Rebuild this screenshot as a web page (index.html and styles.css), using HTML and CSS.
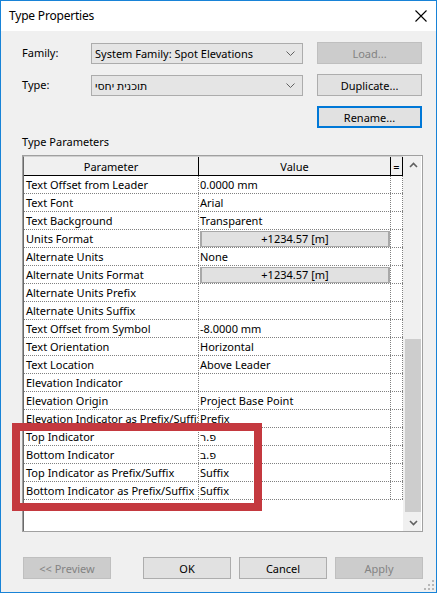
FILE: index.html
```html
<!DOCTYPE html>
<html>
<head>
<meta charset="utf-8">
<link rel="stylesheet" href="styles.css">
</head>
<body>
<div class="window">
  <div class="titlebar">
    <span class="title">Type Properties</span>
    <svg class="close" width="12" height="12" viewBox="0 0 12 12"><path d="M0.5 0.5 L11.5 11.5 M11.5 0.5 L0.5 11.5" stroke="#000" stroke-width="1.1" fill="none"/></svg>
  </div>
  <div class="body">
    <div class="top-grid">
      <span class="lbl">Family:</span>
      <div class="combo"><span class="combo-text">System Family: Spot Elevations</span><svg class="chev" width="9" height="5" viewBox="0 0 9 5"><path d="M0.5 0.5 L4.5 4.5 L8.5 0.5" stroke="#606060" fill="none"/></svg></div>
      <div class="btn disabled">Load...</div>
      <span class="lbl">Type:</span>
      <div class="combo"><span class="combo-text">תוכנית יחסי</span><svg class="chev" width="9" height="5" viewBox="0 0 9 5"><path d="M0.5 0.5 L4.5 4.5 L8.5 0.5" stroke="#606060" fill="none"/></svg></div>
      <div class="btn">Duplicate...</div>
      <span></span>
      <span></span>
      <div class="btn focus">Rename...</div>
    </div>
    <div class="section-label">Type Parameters</div>
    <div class="table-box">
      <div class="grid">
        <div class="row head">
          <div class="c1">Parameter</div>
          <div class="c2">Value</div>
          <div class="c3">=</div>
        </div>
        <div class="row"><div class="c1">Text Offset from Leader</div><div class="c2">0.0000 mm</div><div class="c3"></div></div>
        <div class="row"><div class="c1">Text Font</div><div class="c2">Arial</div><div class="c3"></div></div>
        <div class="row"><div class="c1">Text Background</div><div class="c2">Transparent</div><div class="c3"></div></div>
        <div class="row"><div class="c1">Units Format</div><div class="c2 has-btn"><div class="vbtn">+1234.57 [m]</div></div><div class="c3"></div></div>
        <div class="row"><div class="c1">Alternate Units</div><div class="c2">None</div><div class="c3"></div></div>
        <div class="row"><div class="c1">Alternate Units Format</div><div class="c2 has-btn"><div class="vbtn">+1234.57 [m]</div></div><div class="c3"></div></div>
        <div class="row"><div class="c1">Alternate Units Prefix</div><div class="c2"></div><div class="c3"></div></div>
        <div class="row"><div class="c1">Alternate Units Suffix</div><div class="c2"></div><div class="c3"></div></div>
        <div class="row"><div class="c1">Text Offset from Symbol</div><div class="c2">-8.0000 mm</div><div class="c3"></div></div>
        <div class="row"><div class="c1">Text Orientation</div><div class="c2">Horizontal</div><div class="c3"></div></div>
        <div class="row"><div class="c1">Text Location</div><div class="c2">Above Leader</div><div class="c3"></div></div>
        <div class="row"><div class="c1">Elevation Indicator</div><div class="c2"></div><div class="c3"></div></div>
        <div class="row"><div class="c1">Elevation Origin</div><div class="c2">Project Base Point</div><div class="c3"></div></div>
        <div class="row"><div class="c1">Elevation Indicator as Prefix/Suffix</div><div class="c2">Prefix</div><div class="c3"></div></div>
        <div class="row"><div class="c1">Top Indicator</div><div class="c2">פ.ר</div><div class="c3"></div></div>
        <div class="row"><div class="c1">Bottom Indicator</div><div class="c2">פ.ב</div><div class="c3"></div></div>
        <div class="row"><div class="c1">Top Indicator as Prefix/Suffix</div><div class="c2">Suffix</div><div class="c3"></div></div>
        <div class="row"><div class="c1">Bottom Indicator as Prefix/Suffix</div><div class="c2">Suffix</div><div class="c3"></div></div>
      </div>
      <div class="scrollbar">
        <div class="arrow"><svg width="9" height="6" viewBox="0 0 9 6"><path d="M1 5 L4.5 1.5 L8 5" stroke="#606060" stroke-width="1.6" fill="none"/></svg></div>
        <div class="track"><div class="thumb"></div></div>
        <div class="arrow"><svg width="9" height="6" viewBox="0 0 9 6"><path d="M1 1 L4.5 4.5 L8 1" stroke="#606060" stroke-width="1.6" fill="none"/></svg></div>
      </div>
    </div>
    <div class="footer">
      <div class="btn disabled wide">&lt;&lt; Preview</div>
      <div class="footer-right">
        <div class="btn wide">OK</div>
        <div class="btn wide">Cancel</div>
        <div class="btn disabled wide">Apply</div>
      </div>
    </div>
  </div>
  <div class="highlight"></div>
  <svg class="grip" width="10" height="10" viewBox="0 0 10 10">
    <rect x="8" y="0" width="2" height="2" fill="#b8b8b8"/>
    <rect x="4" y="4" width="2" height="2" fill="#b8b8b8"/>
    <rect x="8" y="4" width="2" height="2" fill="#b8b8b8"/>
    <rect x="0" y="8" width="2" height="2" fill="#b8b8b8"/>
    <rect x="4" y="8" width="2" height="2" fill="#b8b8b8"/>
    <rect x="8" y="8" width="2" height="2" fill="#b8b8b8"/>
  </svg>
</div>
</body>
</html>
```
FILE: styles.css
```css
* { box-sizing: border-box; }
html, body { margin: 0; padding: 0; }
body {
  font-family: "Noto Sans", "DejaVu Sans", sans-serif;
  font-size: 11px;
  color: #000;
  background: #f0f0f0;
}
.window {
  position: relative;
  width: 437px;
  height: 593px;
  border: 1px solid #1883d7;
  background: #f0f0f0;
  overflow: hidden;
}
.titlebar {
  height: 30px;
  background: #fff;
  display: flex;
  align-items: center;
  justify-content: space-between;
  padding: 0 9px 0 8px;
}
.title { font-size: 12px; line-height: 16px; letter-spacing: -0.2px; }
.close { display: block; }
.body {
  padding: 11px 13px 0 21px;
}
.top-grid {
  display: grid;
  grid-template-columns: 69px 226px 105px;
  grid-auto-rows: 22px;
  row-gap: 10px;
  align-items: center;
}
.lbl { line-height: 16px; }
.combo {
  width: 212px;
  height: 21px;
  background: #e5e5e5;
  border: 1px solid #acacac;
  display: flex;
  align-items: center;
  justify-content: space-between;
  padding: 0 7px 0 3px;
}
.combo-text { white-space: nowrap; }
.chev { display: block; }
.btn {
  height: 22px;
  border: 1px solid #adadad;
  background: #e1e1e1;
  display: flex;
  align-items: center;
  justify-content: center;
  white-space: nowrap;
}
.btn.disabled {
  background: #cccccc;
  border-color: #bfbfbf;
  color: #838383;
}
.btn.focus {
  border: 2px solid #0078d7;
}
.btn.wide { width: 88px; }
.section-label {
  margin-top: 6px;
  line-height: 16px;
}
.table-box {
  margin-top: 5px;
  width: 401px;
  height: 377px;
  border: 1px solid #a0a0a0;
  background: #fff;
  display: flex;
  padding-right: 1px;
}
.grid {
  width: 380px;
  border-left: 1px solid #6a6a6a;
  border-top: 1px solid #d0d0d0;
  height: 100%;
}
.row {
  display: flex;
  height: 18px;
  border-bottom: 1px dotted #808080;
}
.row > div {
  height: 17px;
  padding-top: 1px;
  line-height: 16px;
  white-space: nowrap;
  overflow: hidden;
}
.c1 { width: 175px; padding-left: 2px; border-right: 1px dotted #808080; }
.c2 { width: 192px; padding-left: 1px; border-right: 1px dotted #808080; }
.c3 { width: 12px; border-right: 1px dotted #808080; text-align: center; }
.row > .c2.has-btn { padding-top: 0; }
.row.head {
  height: 19px;
  background: #f0f0f0;
  border-bottom: 1px solid #000;
}
.row.head > div {
  height: 18px;
  padding: 1px 0 0 0;
  line-height: 17px;
  text-align: center;
  border-right: 1px solid #000;
}
.vbtn {
  margin-top: 1px;
  width: 190px;
  height: 16px;
  line-height: 14px;
  background: #e1e1e1;
  border: 1px solid #a8a8a8;
  border-left-width: 2px;
  border-right-width: 2px;
  text-align: center;
}
.scrollbar {
  width: 18px;
  background: #f0f0f0;
  display: flex;
  flex-direction: column;
}
.arrow {
  height: 17px;
  display: flex;
  align-items: center;
  justify-content: center;
  padding-left: 2px;
}
.arrow svg { display: block; }
.track { flex: 1; padding-left: 2px; }
.thumb {
  margin-top: 166px;
  height: 173px;
  background: #cdcdcd;
}
.footer {
  margin-top: 25px;
  width: 401px;
  padding-left: 1px;
  display: flex;
  justify-content: space-between;
}
.footer-right {
  display: flex;
  gap: 8px;
}
.highlight {
  position: absolute;
  left: 11px;
  top: 422px;
  width: 250px;
  height: 88px;
  border: 8px solid #c4393f;
}
.grip {
  position: absolute;
  right: 2px;
  bottom: 2px;
}
```
